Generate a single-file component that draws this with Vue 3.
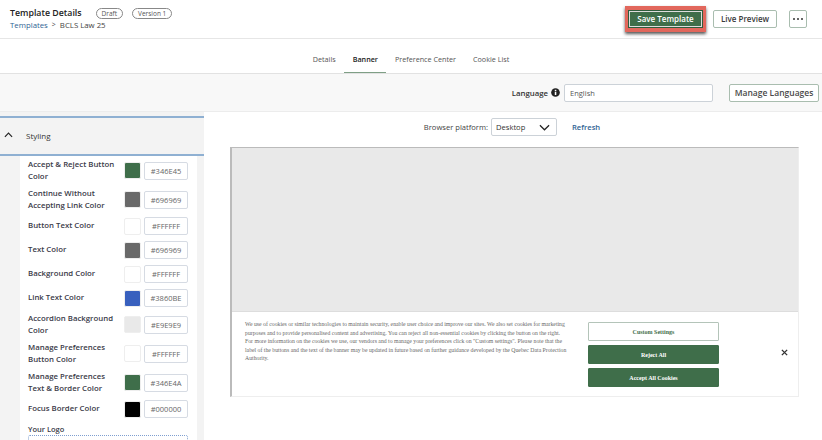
<template>
  <div class="page">
    <header class="top">
      <div class="title-block">
        <div class="title-row">
          <h1>Template Details</h1>
          <span class="pill draft">Draft</span>
          <span class="pill">Version 1</span>
        </div>
        <div class="crumbs">
          <a>Templates</a>
          <span class="sep">&gt;</span>
          <span>BCLS Law 25</span>
        </div>
      </div>
      <div class="actions">
        <div class="highlight"><button class="save">Save Template</button></div>
        <button class="outline live">Live Preview</button>
        <button class="outline more">
          <svg viewBox="0 0 10 2" width="10" height="2">
            <circle cx="1" cy="1" r="1" fill="#333" />
            <circle cx="5" cy="1" r="1" fill="#333" />
            <circle cx="9" cy="1" r="1" fill="#333" />
          </svg>
        </button>
      </div>
    </header>

    <nav class="tabs">
      <span v-for="tab in tabs" :key="tab" class="tab" :class="{ active: tab === 'Banner' }">{{ tab }}</span>
    </nav>

    <div class="lang-bar">
      <span class="lang-label">Language</span>
      <svg class="info" viewBox="0 0 10 10" width="9" height="9">
        <circle cx="5" cy="5" r="4.8" fill="#222" />
        <rect x="4.2" y="4.2" width="1.7" height="3.6" fill="#fff" />
        <rect x="4.2" y="2" width="1.7" height="1.5" fill="#fff" />
      </svg>
      <div class="lang-input">English</div>
      <button class="outline manage">Manage Languages</button>
    </div>

    <div class="body">
      <aside class="side">
        <div class="acc-head">
          <svg viewBox="0 0 10 6" width="9" height="6">
            <path d="M1 5 L5 1 L9 5" fill="none" stroke="#222" stroke-width="1.3" />
          </svg>
          <span>Styling</span>
        </div>
        <div class="panel">
          <div v-for="row in colors" :key="row.label" class="color-row">
            <label>{{ row.label }}</label>
            <span class="swatch" :style="{ background: row.color }"></span>
            <span class="hex">{{ row.hex }}</span>
          </div>
          <div class="logo-label">Your Logo</div>
          <div class="logo-drop"></div>
        </div>
      </aside>

      <main class="preview">
        <div class="platform">
          <span class="plat-label">Browser platform:</span>
          <div class="select">
            <span>Desktop</span>
            <svg viewBox="0 0 12 7" width="11" height="7">
              <path d="M1 1 L6 6 L11 1" fill="none" stroke="#222" stroke-width="1.3" />
            </svg>
          </div>
          <a class="refresh">Refresh</a>
        </div>
        <div class="frame">
          <div class="stage"></div>
          <div class="banner">
            <p>
              We use of cookies or similar technologies to maintain security, enable user choice and improve our sites. We also set cookies for marketing<br />
              purposes and to provide personalised content and advertising. You can reject all non-essential cookies by clicking the button on the right.<br />
              For more information on the cookies we use, our vendors and to manage your preferences click on "Custom settings". Please note that the<br />
              label of the buttons and the text of the banner may be updated in future based on further guidance developed by the Quebec Data Protection<br />
              Authority.
            </p>
            <div class="banner-btns">
              <button class="b-custom">Custom Settings</button>
              <button class="b-green">Reject All</button>
              <button class="b-green">Accept All Cookies</button>
            </div>
            <svg class="close" viewBox="0 0 8 8" width="7" height="7">
              <path d="M1 1 L7 7 M7 1 L1 7" stroke="#333" stroke-width="1.6" />
            </svg>
          </div>
        </div>
      </main>
    </div>
  </div>
</template>

<script setup>
const tabs = ["Details", "Banner", "Preference Center", "Cookie List"];

const colors = [
  { label: "Accept & Reject Button Color", color: "#3f6e4a", hex: "#346E45" },
  { label: "Continue Without Accepting Link Color", color: "#696969", hex: "#696969" },
  { label: "Button Text Color", color: "#ffffff", hex: "#FFFFFF" },
  { label: "Text Color", color: "#696969", hex: "#696969" },
  { label: "Background Color", color: "#ffffff", hex: "#FFFFFF" },
  { label: "Link Text Color", color: "#3860be", hex: "#3860BE" },
  { label: "Accordion Background Color", color: "#e9e9e9", hex: "#E9E9E9" },
  { label: "Manage Preferences Button Color", color: "#ffffff", hex: "#FFFFFF" },
  { label: "Manage Preferences Text & Border Color", color: "#3f6e4a", hex: "#346E4A" },
  { label: "Focus Border Color", color: "#000000", hex: "#000000" },
];
</script>

<style>
html,
body {
  margin: 0;
  background: #fff;
  overflow: hidden;
}
</style>

<style scoped>
.page {
  width: 822px;
  height: 440px;
  overflow: hidden;
  font-family: "Open Sans", Lato, sans-serif;
  color: #2b2b2b;
  font-size: 8px;
}
button {
  font-family: inherit;
  cursor: pointer;
}
.top {
  height: 38px;
  display: flex;
  justify-content: space-between;
  border-bottom: 1px solid #e6e6e6;
  padding: 0 15px 0 10px;
}
.title-block {
  padding-top: 7px;
}
.title-row {
  display: flex;
  align-items: center;
  height: 12px;
}
h1 {
  margin: 0 14px 0 0;
  font-size: 8.8px;
  font-weight: 600;
  color: #222;
}
.pill {
  border: 1px solid #888;
  border-radius: 7px;
  font-size: 6.5px;
  height: 9px;
  line-height: 9px;
  padding: 0 5px;
  margin-right: 9px;
  color: #555;
}
.crumbs {
  margin-top: 0;
  font-size: 7.8px;
  line-height: 12px;
  color: #444;
  display: flex;
  gap: 4px;
}
.crumbs a {
  color: #2f6494;
}
.sep {
  font-size: 7px;
}
.actions {
  display: flex;
  align-items: center;
  padding-bottom: 1px;
}
.highlight {
  background: #e2675c;
  padding: 4px 3px;
  box-shadow: 0 2px 3px #555;
  margin-right: 7px;
}
.save {
  display: block;
  width: 75px;
  height: 18px;
  border: 1px solid #2f5d3d;
  outline: 1px solid #ddd;
  outline-offset: -2px;
  background: #3f6e4a;
  color: #fff;
  font-size: 8px;
  font-weight: 600;
  padding: 0;
}
.outline {
  background: #fff;
  border: 1px solid #a9bdaf;
  border-radius: 2px;
  color: #3a3a3a;
  font-weight: 600;
  font-size: 8px;
  padding: 0;
}
.live {
  width: 64px;
  height: 18px;
  margin-right: 12px;
}
.more {
  width: 18px;
  height: 18px;
  display: flex;
  align-items: center;
  justify-content: center;
}
.tabs {
  height: 34px;
  border-bottom: 1px solid #e2e2e2;
  display: flex;
  justify-content: center;
}
.tab {
  line-height: 41px;
  height: 34px;
  padding: 0 8.5px;
  font-size: 7.2px;
  color: #555;
}
.tab.active {
  color: #222;
  font-weight: 600;
  border-bottom: 1px solid #7f9f86;
  height: 33px;
}
.lang-bar {
  height: 37px;
  background: #f8f8f8;
  border-bottom: 1px solid #ececec;
  display: flex;
  align-items: center;
  justify-content: flex-end;
  padding: 0 3px 0 0;
}
.lang-label {
  font-size: 7.8px;
  font-weight: 600;
  color: #333;
}
.info {
  margin: 0 4px 0 3px;
}
.lang-input {
  width: 142px;
  height: 16px;
  line-height: 16px;
  padding-left: 5px;
  border: 1px solid #ccd2d8;
  border-radius: 2px;
  background: #fff;
  font-size: 7.5px;
  color: #555;
}
.manage {
  width: 90px;
  height: 18px;
  margin-left: 16px;
  font-size: 8.5px;
  color: #4a4a4a;
}
.body {
  display: flex;
}
.side {
  width: 204px;
  flex: none;
  height: 330px;
  background: #f3f3f3;
  padding-top: 4px;
  box-sizing: border-box;
}
.acc-head {
  height: 40px;
  box-sizing: border-box;
  border-top: 2px solid #8fb0d2;
  border-bottom: 2px solid #8fb0d2;
  display: flex;
  align-items: center;
  padding: 0 0 2px 4px;
  gap: 13px;
  font-size: 8px;
  color: #333;
}
.panel {
  margin-left: 20px;
  width: 177px;
  background: #fff;
  padding: 0 9px 0 8px;
  box-sizing: border-box;
  height: 290px;
}
.color-row {
  display: flex;
  align-items: center;
  min-height: 24px;
}
.color-row label {
  width: 96px;
  flex: none;
  line-height: 11.5px;
  padding: 3px 4px 3px 0;
  box-sizing: border-box;
  font-size: 7.8px;
  font-weight: 600;
  color: #3a3a48;
}
.swatch {
  width: 17px;
  height: 17px;
  border-radius: 2px;
  border: 1px solid #eee;
  box-sizing: border-box;
  flex: none;
}
.hex {
  width: 44px;
  height: 18px;
  margin-left: 3px;
  line-height: 16px;
  border: 1px solid #d6dbe3;
  border-radius: 2px;
  box-sizing: border-box;
  text-align: center;
  font-size: 7.5px;
  color: #666;
  flex: none;
}
.logo-label {
  margin-top: 2px;
  font-size: 7.5px;
  line-height: 12px;
  font-weight: 600;
  color: #3a3a48;
}
.logo-drop {
  height: 30px;
  border: 1px dotted #7f9fd0;
  border-radius: 2px;
}
.preview {
  flex: 1;
  padding: 0 23px 0 26px;
}
.platform {
  height: 30px;
  margin-bottom: 5px;
  display: flex;
  align-items: center;
  justify-content: center;
  padding-right: 5px;
  font-size: 7.6px;
  color: #444;
}
.plat-label {
  margin-right: 3px;
}
.select {
  width: 66px;
  height: 18px;
  border: 1px solid #ccd2d8;
  border-radius: 2px;
  display: flex;
  align-items: center;
  justify-content: space-between;
  padding: 0 6px 0 4px;
  box-sizing: border-box;
  color: #333;
}
.refresh {
  margin-left: 15px;
  color: #2f6494;
  font-weight: 600;
}
.frame {
  border-top: 1px solid #bbb;
  border-left: 2px solid #bbb;
  border-bottom: 1px solid #eee;
  border-right: 1px solid #eee;
  box-sizing: border-box;
  height: 250px;
}
.stage {
  height: 163px;
  background: #e9e9e9;
  border-bottom: 1px solid #ddd;
}
.banner {
  display: flex;
  align-items: flex-start;
  font-family: "Liberation Serif", serif;
  position: relative;
  height: 85px;
}
.banner p {
  margin: 8px 0 0 13px;
  width: 325px;
  white-space: nowrap;
  font-size: 5.75px;
  line-height: 8.6px;
  color: #696969;
}
.banner-btns {
  margin: 10px 0 0 18px;
  width: 131px;
  display: flex;
  flex-direction: column;
  gap: 4px;
}
.banner-btns button {
  height: 19px;
  font-family: "Liberation Serif", serif;
  font-size: 6px;
  font-weight: 700;
  padding: 0;
  border-radius: 1px;
}
.b-custom {
  background: #fff;
  border: 1px solid #b4c4b9;
  color: #3f6e4a;
}
.b-green {
  background: #3f6e4a;
  border: 1px solid #3f6e4a;
  color: #fff;
}
.close {
  position: absolute;
  right: 10px;
  top: 37px;
}
</style>
